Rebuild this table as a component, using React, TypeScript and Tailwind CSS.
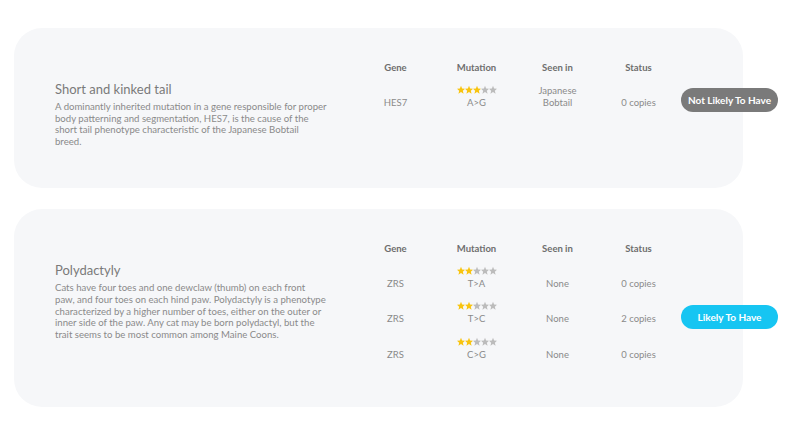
import React from "react";

type Row = { gene: string; rating: number; mutation: string; seen: string[]; status: string };
type Trait = {
  title: string;
  desc: string[];
  rows: Row[];
  badge: { label: string; cls: string };
};

const traits: Trait[] = [
  {
    title: "Short and kinked tail",
    desc: [
      "A dominantly inherited mutation in a gene responsible for proper",
      "body patterning and segmentation, HES7, is the cause of the",
      "short tail phenotype characteristic of the Japanese Bobtail",
      "breed.",
    ],
    rows: [{ gene: "HES7", rating: 3, mutation: "A>G", seen: ["Japanese", "Bobtail"], status: "0 copies" }],
    badge: { label: "Not Likely To Have", cls: "bg-[#7a7a7a]" },
  },
  {
    title: "Polydactyly",
    desc: [
      "Cats have four toes and one dewclaw (thumb) on each front",
      "paw, and four toes on each hind paw. Polydactyly is a phenotype",
      "characterized by a higher number of toes, either on the outer or",
      "inner side of the paw. Any cat may be born polydactyl, but the",
      "trait seems to be most common among Maine Coons.",
    ],
    rows: [
      { gene: "ZRS", rating: 2, mutation: "T>A", seen: ["None"], status: "0 copies" },
      { gene: "ZRS", rating: 2, mutation: "T>C", seen: ["None"], status: "2 copies" },
      { gene: "ZRS", rating: 2, mutation: "C>G", seen: ["None"], status: "0 copies" },
    ],
    badge: { label: "Likely To Have", cls: "bg-[#16c5f2]" },
  },
];

function Star({ on }: { on: boolean }) {
  return (
    <svg width="8" height="8" viewBox="0 0 10 10" className="block overflow-visible">
      <polygon
        points="5,-0.2 6.4,3.1 10,3.4 7.3,5.8 8.2,9.6 5,7.6 1.8,9.6 2.7,5.8 0,3.4 3.6,3.1"
        fill={on ? "#f8c40f" : "#bcbcbc"}
      />
    </svg>
  );
}

function Stars({ n }: { n: number }) {
  return (
    <div className="flex justify-center">
      {[0, 1, 2, 3, 4].map((i) => (
        <Star key={i} on={i < n} />
      ))}
    </div>
  );
}

function TraitCard({ t }: { t: Trait }) {
  return (
    <div className="w-[729px] min-h-[160px] rounded-[28px] bg-[#f6f7f9] flex pl-[41px] pt-[30px] pb-[41px]">
      <div className="w-[272px] mt-[23px] shrink-0">
        <div className="text-[13px] leading-[16px] text-[#7a7a7a]">{t.title}</div>
        <p className="mt-[4px] text-[9.6px] leading-[11.6px] text-[#8a8a8a] whitespace-nowrap">
          {t.desc.map((l, i) => (
            <React.Fragment key={i}>
              {l}
              {i < t.desc.length - 1 && <br />}
            </React.Fragment>
          ))}
        </p>
      </div>
      <div className="ml-[28px] flex shrink-0 self-start">
        <div className="w-[324px]">
          <div className="grid grid-cols-4 h-[20px] items-center text-center text-[9.5px] font-bold text-[#6e6e6e]">
            <div>Gene</div>
            <div>Mutation</div>
            <div>Seen in</div>
            <div>Status</div>
          </div>
          {t.rows.map((r, i) => (
            <div key={i} className="grid grid-cols-4 h-[35.5px] pt-[7px] items-end pb-[4px] text-center text-[9.5px] leading-[12px] text-[#8a8a8a]">
              <div className="pb-[1px]">{r.gene}</div>
              <div>
                <Stars n={r.rating} />
                <div className="mt-[3px] pb-[1px]">{r.mutation}</div>
              </div>
              <div className="pb-[1px]">
                {r.seen.map((s) => (
                  <div key={s}>{s}</div>
                ))}
              </div>
              <div className="pb-[1px]">{r.status}</div>
            </div>
          ))}
        </div>
        <div className="ml-[2px] flex items-center pt-[29px]">
          <div
            className={`w-[97px] h-[24px] rounded-full ${t.badge.cls} text-white text-[10px] font-bold flex items-center justify-center whitespace-nowrap`}
          >
            {t.badge.label}
          </div>
        </div>
      </div>
    </div>
  );
}

export default function App() {
  return (
    <div className="w-[792px] h-[446px] bg-white overflow-hidden pl-[14px] pt-[28px] flex flex-col gap-[21px]" style={{ fontFamily: "Lato, 'Open Sans', sans-serif" }}>
      {traits.map((t) => (
        <TraitCard key={t.title} t={t} />
      ))}
    </div>
  );
}
